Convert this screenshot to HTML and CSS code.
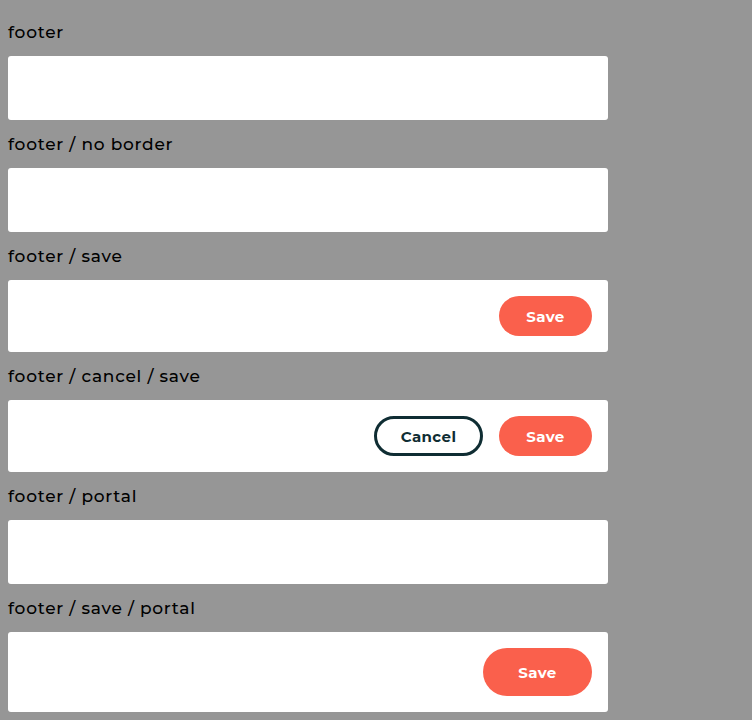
FILE: index.html
```html
<!DOCTYPE html>
<html>
<head>
<meta charset="utf-8">
<link rel="stylesheet" href="styles.css">
</head>
<body>
<div class="page">
  <section class="story">
    <div class="label">footer</div>
    <div class="footer footer-empty"></div>
  </section>
  <section class="story">
    <div class="label">footer / no border</div>
    <div class="footer footer-empty"></div>
  </section>
  <section class="story">
    <div class="label">footer / save</div>
    <div class="footer">
      <button class="btn btn-primary">Save</button>
    </div>
  </section>
  <section class="story">
    <div class="label">footer / cancel / save</div>
    <div class="footer">
      <button class="btn btn-secondary">Cancel</button>
      <button class="btn btn-primary">Save</button>
    </div>
  </section>
  <section class="story">
    <div class="label">footer / portal</div>
    <div class="footer footer-empty"></div>
  </section>
  <section class="story">
    <div class="label">footer / save / portal</div>
    <div class="footer">
      <button class="btn btn-primary btn-large">Save</button>
    </div>
  </section>
</div>
</body>
</html>
```
FILE: styles.css
```css
html, body {
  margin: 0;
  padding: 0;
  background: #969696;
}
body {
  font-family: "Montserrat", "Lato", "Liberation Sans", sans-serif;
  color: #111;
}
.page {
  padding: 8px 8px 0;
  width: 600px;
  display: flex;
  flex-direction: column;
}
.label {
  height: 48px;
  display: flex;
  align-items: center;
  font-size: 17px;
  font-weight: 500;
  letter-spacing: 0.75px;
  color: #000;
}
.footer {
  background: #fff;
  border-radius: 3px;
  padding: 16px;
  display: flex;
  justify-content: flex-end;
  align-items: center;
  gap: 16px;
}
.footer-empty {
  height: 32px;
}
.btn {
  font-family: "Montserrat", "Lato", "Liberation Sans", sans-serif;
  font-weight: 700;
  font-size: 15px;
  letter-spacing: 0.4px;
  height: 40px;
  border-radius: 20px;
  border: none;
  padding: 0;
  display: flex;
  align-items: center;
  justify-content: center;
  cursor: pointer;
}
.btn-primary {
  width: 93px;
  background: #fa604c;
  color: #fff;
}
.btn-secondary {
  width: 109px;
  background: #fff;
  color: #0f2d33;
  border: 3px solid #0f2d33;
}
.btn-large {
  width: 109px;
  height: 48px;
  border-radius: 24px;
}
```
